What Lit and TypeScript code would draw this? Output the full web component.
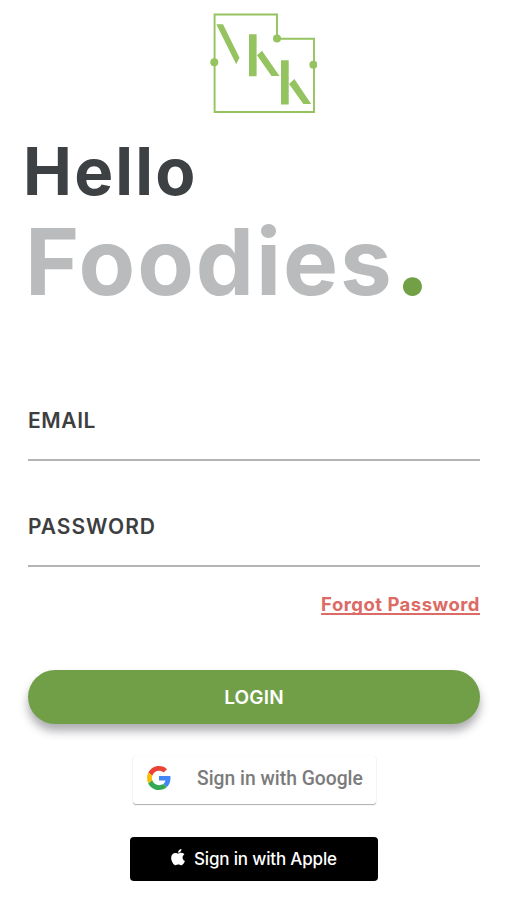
import { LitElement, html, css } from "lit";
import { customElement, property } from "lit/decorators.js";

@customElement("brand-logo")
class BrandLogo extends LitElement {
  static styles = css`
    :host { display: block; height: 104px; width: 108px; }
    svg { display: block; }
  `;
  render() {
    return html`<svg width="108" height="104" viewBox="209 11 108 104" fill="#95c360">
      <path d="M214.6 14.5H277V38.8H314V112H214.6Z" fill="none" stroke="#95c360" stroke-width="1.9"/>
      <circle cx="214.3" cy="62.3" r="4"/>
      <circle cx="277" cy="38.5" r="4"/>
      <circle cx="313.4" cy="64.7" r="4"/>
      <path d="M216.3 24.2H223L239.5 57.8L236.2 64.2ZM249 34.3H256.6V76.3H249ZM257 55.2L262 50.7L279.5 76H271.5ZM281 60.3H288.7V104.6H281ZM289 84L294.4 79L311.2 104H303.4Z"/>
    </svg>`;
  }
}

@customElement("form-field")
class FormField extends LitElement {
  @property() label = "";
  static styles = css`
    :host { display: block; border-bottom: 2px solid #b4b4b4; height: 53px; box-sizing: border-box; }
    .label { font-size: 21px; line-height: 26px; font-weight: 600; letter-spacing: var(--tracking, 0.6px); color: #3d3e40; }
  `;
  render() {
    return html`<div class="label">${this.label}</div>`;
  }
}

const googleIcon = html`<svg width="24" height="24" viewBox="0 0 48 48">
  <path fill="#EA4335" d="M24 9.5c3.54 0 6.71 1.22 9.21 3.6l6.85-6.85C35.9 2.38 30.47 0 24 0 14.62 0 6.51 5.38 2.56 13.22l7.98 6.19C12.43 13.72 17.74 9.5 24 9.5z"/>
  <path fill="#4285F4" d="M46.98 24.55c0-1.57-.15-3.09-.38-4.55H24v9.02h12.94c-.58 2.96-2.26 5.48-4.78 7.18l7.73 6c4.51-4.18 7.09-10.36 7.09-17.65z"/>
  <path fill="#FBBC05" d="M10.53 28.59c-.48-1.45-.76-2.99-.76-4.59s.27-3.14.76-4.59l-7.98-6.19C.92 16.46 0 20.12 0 24s.92 7.54 2.56 10.78z"/>
  <path fill="#34A853" d="M24 48c6.48 0 11.93-2.13 15.89-5.81l-7.73-6c-2.15 1.45-4.92 2.3-8.16 2.3-6.26 0-11.57-4.22-13.47-9.91l-7.98 6.19C6.51 42.62 14.62 48 24 48z"/>
</svg>`;

const appleIcon = html`<svg width="14" height="17" viewBox="0 0 384 472" preserveAspectRatio="none">
  <path fill="#fff" d="M318.7 236.7c-.2-36.7 16.4-64.4 50-84.8-18.8-26.9-47.2-41.7-84.7-44.6-35.5-2.8-74.3 20.7-88.5 20.7-15 0-49.4-19.7-76.4-19.700C63.300 109.200 4 153.200 4 242.700q0 39.300 14.400 81.200c12.800 36.700 59 126.700 107.200 125.200 25.200-.6 43-17.900 75.800-17.900 31.800 0 48.300 17.900 76.400 17.900 48.600-.7 90.400-82.500 102.600-119.300-65.200-30.700-61.700-90-61.700-93.100zM262.100 72.500c27.300-32.400 24.800-61.900 24-72.500-24.100 1.400-52 16.400-67.900 34.900-17.500 19.800-27.800 44.300-25.600 71.900 26.100 2 49.900-11.400 69.500-34.300z"/>
</svg>`;

@customElement("app-root")
class AppRoot extends LitElement {
  static styles = css`
    :host {
      display: block; box-sizing: border-box; width: 507px; height: 900px; padding: 11px 27px 0 28px;
      background: #fff; overflow: hidden; font-family: Inter, "Liberation Sans", sans-serif;
    }
    .screen { display: flex; flex-direction: column; }
    brand-logo { margin-left: 181px; }
    h1 { margin: 0; font-weight: 700; white-space: nowrap; }
    .hello { margin: 17px 0 0 -5px; font-size: 65.5px; line-height: 80px; color: #3e4143; letter-spacing: 2.2px; }
    .foodies { margin: -1px 0 0 -3px; font-size: 92.5px; line-height: 100px; color: #b9bbbd; letter-spacing: 1.9px; }
    .dot { color: #71a047; font-size: 112px; line-height: 0; letter-spacing: 0; }
    form-field.email { margin-top: 97px; }
    form-field.password { margin-top: 53px; --tracking: 0.95px; }
    .forgot { align-self: flex-end; margin-top: 25px; font-size: 18.5px; line-height: 24px; font-weight: 700; color: #dc6a65;
      letter-spacing: 0.48px; text-decoration: underline; text-decoration-thickness: 2px; text-underline-offset: 1.500px; text-decoration-skip-ink: none; }
    .login { margin-top: 54px; height: 54px; border: 0; border-radius: 27px; background: #719f48; color: #fff;
      font: 600 19px/54px Inter, sans-serif; letter-spacing: 0.2px; padding: 1px 0 0; box-shadow: 0 7px 10px rgba(50, 50, 60, 0.4); }
    .social { display: flex; align-items: center; box-sizing: border-box; border: 0; white-space: nowrap; }
    .google { align-self: flex-start; margin: 32px 0 0 105px; width: 243px; height: 48px; padding: 0 0 3px 14px; gap: 26px;
      background: #fff; border-radius: 3px; color: #7b7b7b; font: 500 19.300px/24px Roboto, sans-serif;
      box-shadow: 0 1px 1px rgba(0, 0, 0, 0.32), 0 0 2px rgba(0, 0, 0, 0.06); }
    .google svg { margin-top: -1px; }
    .google .caption { margin-top: 1px; }
    .apple { align-self: flex-start; margin: 33px 0 0 102px; width: 248px; height: 44px; padding: 0 0 0 41px; gap: 9px;
      background: #000; border-radius: 4px; color: #fff; font: 500 17px/24px Inter, sans-serif; letter-spacing: -0.17px; }
    .apple svg { margin-top: -3px; }
  `;
  render() {
    return html`<main class="screen">
      <brand-logo></brand-logo>
      <h1 class="hello">Hello</h1>
      <h1 class="foodies">Foodies<span class="dot">.</span></h1>
      <form-field class="email" label="EMAIL"></form-field>
      <form-field class="password" label="PASSWORD"></form-field>
      <a class="forgot">Forgot Password</a>
      <button class="login">LOGIN</button>
      <button class="social google">${googleIcon}<span class="caption">Sign in with Google</span></button>
      <button class="social apple">${appleIcon}<span class="caption">Sign in with Apple</span></button>
    </main>`;
  }
}
